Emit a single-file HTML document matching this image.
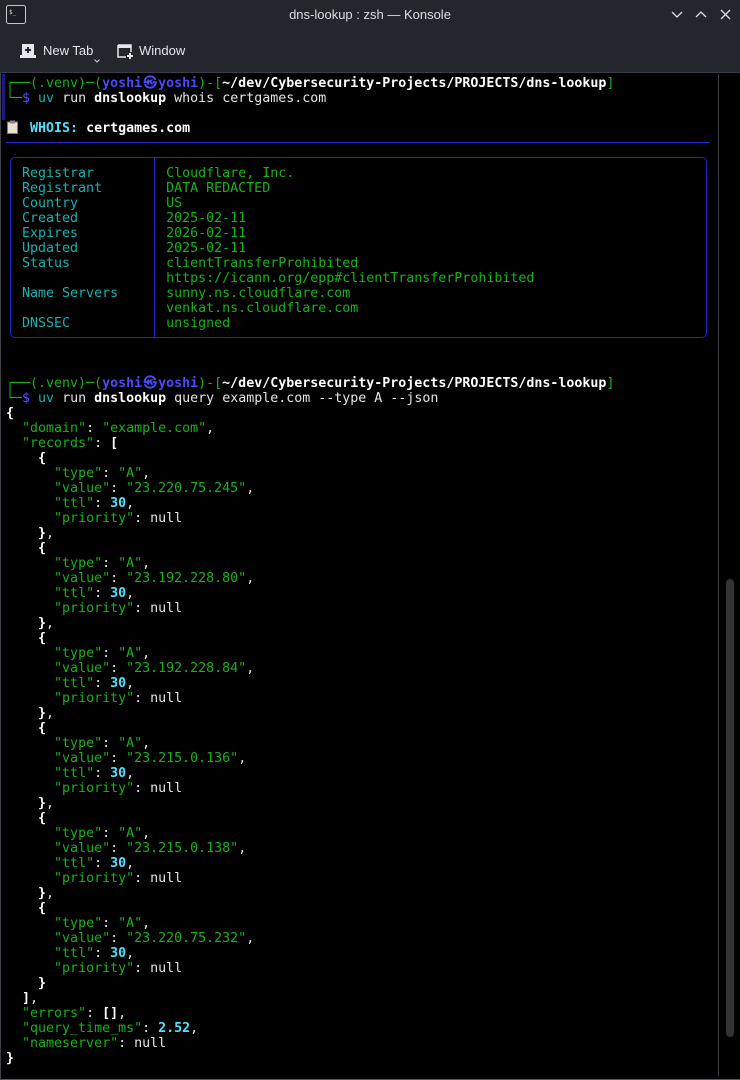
<!DOCTYPE html>
<html><head><meta charset="utf-8"><style>
*{margin:0;padding:0;box-sizing:border-box}
body{width:740px;height:1080px;background:#000;overflow:hidden;position:relative;font-family:"Liberation Sans",sans-serif}
#top{position:absolute;left:0;top:0;width:740px;height:73px;background:#24262e;border-bottom:1px solid #3a3d46}
.title{position:absolute;top:7px;left:0;width:740px;text-align:center;color:#dcdde0;font-size:13px}
.tb{position:absolute;top:43px;color:#e6e6e8;font-size:13px}
#term{position:absolute;left:0;top:73px;width:740px;height:1007px;background:#000;border-left:1px solid #3f4148;border-bottom:1px solid #55575e}
pre{position:absolute;left:6px;top:76px;font-family:"DejaVu Sans Mono","Liberation Mono",monospace;font-size:13.3px;line-height:15px;color:#e5e5e5;margin:0}
.g{color:#18b218}.b{color:#4a4aff;font-weight:bold}.w{color:#fff;font-weight:bold}.c{color:#18b2b2}.C{color:#54e0ff;font-weight:bold}.bb{color:#5454ff}
.at{display:inline-block;width:16px;text-align:center}
</style></head><body>
<div id="top">
 <svg style="position:absolute;left:6px;top:5px" width="20" height="19" viewBox="0 0 20 19"><rect x="0.5" y="0.5" width="19" height="18" rx="2" fill="#1b1d22" stroke="#c8c8cc"/><text x="3" y="9" font-size="6" fill="#ddd" font-family="DejaVu Sans Mono">$_</text></svg>
 <div class="title">dns-lookup : zsh — Konsole</div>
 <svg style="position:absolute;left:670px;top:8px" width="64" height="14" viewBox="0 0 64 14" stroke="#e0e0e0" stroke-width="1.3" fill="none"><path d="M2 4l5 5 5-5"/><path d="M26 9l5-5 5 5"/><path d="M51 2l9 9M60 2l-9 9"/></svg>
 <svg style="position:absolute;left:20px;top:44px" width="16" height="14" viewBox="0 0 16 14"><path d="M2 0h12v11h2v3H0v-3h2z" fill="#e6e6e8"/><path d="M8 3v6M5 6h6" stroke="#24262e" stroke-width="2"/></svg>
 <div class="tb" style="left:43px">New Tab</div>
 <svg style="position:absolute;left:94px;top:59px" width="6" height="4"><path d="M0.5 0.5l2.5 2.5 2.5-2.5" stroke="#ccc" fill="none"/></svg>
 <svg style="position:absolute;left:117px;top:44px" width="16" height="15" viewBox="0 0 16 15"><path d="M1 1h13v7M9 13H1V1" stroke="#e6e6e8" stroke-width="1.5" fill="none"/><rect x="1" y="1" width="13" height="3" fill="#e6e6e8"/><path d="M13 9v6M10 12h6" stroke="#e6e6e8" stroke-width="2"/></svg>
 <div class="tb" style="left:139px">Window</div>
</div>
<div id="term"></div>
<div style="position:absolute;left:2px;top:74px;width:3px;height:46px;background:#1a1a7a"></div>
<div style="position:absolute;left:718px;top:74px;width:1px;height:1002px;background:#3a3c44"></div>
<div style="position:absolute;left:726px;top:579px;width:8px;height:458px;border-radius:4px;background:#333"></div>
<div style="position:absolute;left:6px;top:142px;width:704px;height:1px;background:#2323c8"></div>
<div style="position:absolute;left:10px;top:157px;width:697px;height:181px;border:1px solid #2323c8;border-radius:5px"></div>
<div style="position:absolute;left:154px;top:157px;width:1px;height:181px;background:#2323c8"></div>
<svg style="position:absolute;left:7px;top:120px" width="11" height="14" viewBox="0 0 11 14"><rect x="0.5" y="2" width="10" height="11.5" fill="#e8e0d0" stroke="#8a7a60"/><rect x="3" y="0.5" width="5" height="3" fill="#888"/></svg>
<pre><span class="g">┌──(.venv)─(</span><span class="b">yoshi<span class="at">㉿</span>yoshi</span><span class="g">)-[</span><span class="w">~/dev/Cybersecurity-Projects/PROJECTS/dns-lookup</span><span class="g">]</span>
<span class="g">└─</span><span class="bb">$</span> <span class="c">uv</span> run <span class="w">dnslookup</span> whois certgames.com

   <span class="C">WHOIS:</span> <span class="w">certgames.com</span>


  <span class="c">Registrar</span>         <span class="g">Cloudflare, Inc.</span>
  <span class="c">Registrant</span>        <span class="g">DATA REDACTED</span>
  <span class="c">Country</span>           <span class="g">US</span>
  <span class="c">Created</span>           <span class="g">2025-02-11</span>
  <span class="c">Expires</span>           <span class="g">2026-02-11</span>
  <span class="c">Updated</span>           <span class="g">2025-02-11</span>
  <span class="c">Status</span>            <span class="g">clientTransferProhibited</span>
                    <span class="g">https://icann.org/epp#clientTransferProhibited</span>
  <span class="c">Name Servers</span>      <span class="g">sunny.ns.cloudflare.com</span>
                    <span class="g">venkat.ns.cloudflare.com</span>
  <span class="c">DNSSEC</span>            <span class="g">unsigned</span>



<span class="g">┌──(.venv)─(</span><span class="b">yoshi<span class="at">㉿</span>yoshi</span><span class="g">)-[</span><span class="w">~/dev/Cybersecurity-Projects/PROJECTS/dns-lookup</span><span class="g">]</span>
<span class="g">└─</span><span class="bb">$</span> <span class="c">uv</span> run <span class="w">dnslookup</span> query example.com --type A --json
<span class="w">{</span>
  <span class="g">"domain"</span>: <span class="g">"example.com"</span>,
  <span class="g">"records"</span>: <span class="w">[</span>
    <span class="w">{</span>
      <span class="g">"type"</span>: <span class="g">"A"</span>,
      <span class="g">"value"</span>: <span class="g">"23.220.75.245"</span>,
      <span class="g">"ttl"</span>: <span class="C">30</span>,
      <span class="g">"priority"</span>: null
    <span class="w">}</span>,
    <span class="w">{</span>
      <span class="g">"type"</span>: <span class="g">"A"</span>,
      <span class="g">"value"</span>: <span class="g">"23.192.228.80"</span>,
      <span class="g">"ttl"</span>: <span class="C">30</span>,
      <span class="g">"priority"</span>: null
    <span class="w">}</span>,
    <span class="w">{</span>
      <span class="g">"type"</span>: <span class="g">"A"</span>,
      <span class="g">"value"</span>: <span class="g">"23.192.228.84"</span>,
      <span class="g">"ttl"</span>: <span class="C">30</span>,
      <span class="g">"priority"</span>: null
    <span class="w">}</span>,
    <span class="w">{</span>
      <span class="g">"type"</span>: <span class="g">"A"</span>,
      <span class="g">"value"</span>: <span class="g">"23.215.0.136"</span>,
      <span class="g">"ttl"</span>: <span class="C">30</span>,
      <span class="g">"priority"</span>: null
    <span class="w">}</span>,
    <span class="w">{</span>
      <span class="g">"type"</span>: <span class="g">"A"</span>,
      <span class="g">"value"</span>: <span class="g">"23.215.0.138"</span>,
      <span class="g">"ttl"</span>: <span class="C">30</span>,
      <span class="g">"priority"</span>: null
    <span class="w">}</span>,
    <span class="w">{</span>
      <span class="g">"type"</span>: <span class="g">"A"</span>,
      <span class="g">"value"</span>: <span class="g">"23.220.75.232"</span>,
      <span class="g">"ttl"</span>: <span class="C">30</span>,
      <span class="g">"priority"</span>: null
    <span class="w">}</span>
  <span class="w">]</span>,
  <span class="g">"errors"</span>: <span class="w">[]</span>,
  <span class="g">"query_time_ms"</span>: <span class="C">2.52</span>,
  <span class="g">"nameserver"</span>: null
<span class="w">}</span></pre>
</body></html>
